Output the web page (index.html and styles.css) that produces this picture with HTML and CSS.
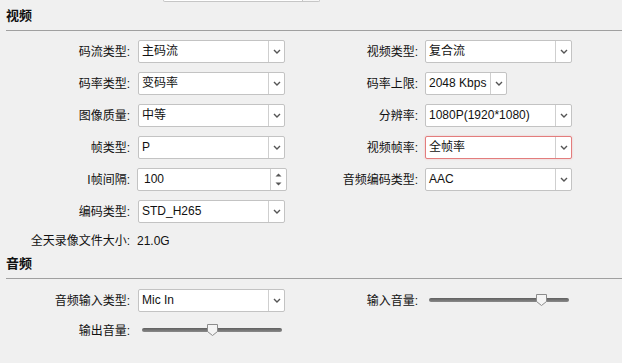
FILE: index.html
```html
<!DOCTYPE html>
<html lang="zh-CN">
  <head>
    <meta charset="UTF-8" />
    <title>视频音频</title>
    <link rel="stylesheet" href="styles.css">
  </head>
  <body>
    <div class="topbar">
      <div class="topbox"><span class="topbox-btn"></span></div>
    </div>

    <section class="group">
      <h2 class="group-title">视频</h2>
      <div class="form">
        <label class="label">码流类型:</label>
        <div class="select"><span class="value">主码流</span><span class="arrow"><svg width="8" height="5" viewBox="0 0 8 5"><path d="M1 1 L4 4 L7 1" /></svg></span></div>
        <label class="label">视频类型:</label>
        <div class="select"><span class="value">复合流</span><span class="arrow"><svg width="8" height="5" viewBox="0 0 8 5"><path d="M1 1 L4 4 L7 1" /></svg></span></div>

        <label class="label">码率类型:</label>
        <div class="select"><span class="value">变码率</span><span class="arrow"><svg width="8" height="5" viewBox="0 0 8 5"><path d="M1 1 L4 4 L7 1" /></svg></span></div>
        <label class="label">码率上限:</label>
        <div class="select short"><span class="value">2048 Kbps</span><span class="arrow"><svg width="8" height="5" viewBox="0 0 8 5"><path d="M1 1 L4 4 L7 1" /></svg></span></div>

        <label class="label">图像质量:</label>
        <div class="select"><span class="value">中等</span><span class="arrow"><svg width="8" height="5" viewBox="0 0 8 5"><path d="M1 1 L4 4 L7 1" /></svg></span></div>
        <label class="label">分辨率:</label>
        <div class="select"><span class="value">1080P(1920*1080)</span><span class="arrow"><svg width="8" height="5" viewBox="0 0 8 5"><path d="M1 1 L4 4 L7 1" /></svg></span></div>

        <label class="label">帧类型:</label>
        <div class="select"><span class="value">P</span><span class="arrow"><svg width="8" height="5" viewBox="0 0 8 5"><path d="M1 1 L4 4 L7 1" /></svg></span></div>
        <label class="label">视频帧率:</label>
        <div class="select invalid"><span class="value">全帧率</span><span class="arrow"><svg width="8" height="5" viewBox="0 0 8 5"><path d="M1 1 L4 4 L7 1" /></svg></span></div>

        <label class="label">I帧间隔:</label>
        <div class="spinner"><span class="value">100</span><span class="spin"><svg width="7" height="4" viewBox="0 0 7 4"><path d="M0.5 3.5 L3.5 0.5 L6.5 3.5 Z" /></svg><svg width="7" height="4" viewBox="0 0 7 4"><path d="M0.5 0.5 L3.5 3.5 L6.5 0.5 Z" /></svg></span></div>
        <label class="label">音频编码类型:</label>
        <div class="select"><span class="value">AAC</span><span class="arrow"><svg width="8" height="5" viewBox="0 0 8 5"><path d="M1 1 L4 4 L7 1" /></svg></span></div>

        <label class="label">编码类型:</label>
        <div class="select"><span class="value">STD_H265</span><span class="arrow"><svg width="8" height="5" viewBox="0 0 8 5"><path d="M1 1 L4 4 L7 1" /></svg></span></div>
      </div>
      <div class="info">
        <span class="label">全天录像文件大小:</span>
        <span class="info-value">21.0G</span>
      </div>
    </section>

    <section class="group">
      <h2 class="group-title">音频</h2>
      <div class="form audio">
        <label class="label">音频输入类型:</label>
        <div class="select"><span class="value">Mic In</span><span class="arrow"><svg width="8" height="5" viewBox="0 0 8 5"><path d="M1 1 L4 4 L7 1" /></svg></span></div>
        <label class="label">输入音量:</label>
        <div class="slider right"><span class="track"></span><svg class="thumb" style="left: 107px" width="11" height="12" viewBox="0 0 11 12"><path d="M0.5 0.5 H10.5 V7.5 L5.5 11.5 L0.5 7.5 Z" /></svg></div>

        <label class="label">输出音量:</label>
        <div class="slider"><span class="track"></span><svg class="thumb" style="left: 65px" width="11" height="12" viewBox="0 0 11 12"><path d="M0.5 0.5 H10.5 V7.5 L5.5 11.5 L0.5 7.5 Z" /></svg></div>
      </div>
    </section>
  </body>
</html>
```

FILE: styles.css
```css
*,
*::before,
*::after {
  box-sizing: border-box;
}

body {
  margin: 0;
  background-color: #f0f0f0;
  color: #111;
  font-family: "Liberation Sans", "Noto Sans CJK SC", sans-serif;
  font-size: 12px;
  width: 622px;
  height: 363px;
  overflow: hidden;
}

.topbar {
  height: 2px;
}

.topbox {
  margin-left: 163px;
  width: 157px;
  height: 2px;
  border: 1px solid #c6c6c6;
  border-top: none;
  border-radius: 0 0 2px 2px;
  background: #fff;
  display: flex;
  justify-content: flex-end;
}

.topbox-btn {
  width: 17px;
  border-left: 1px solid #c6c6c6;
  background: #f7f7f7;
}

.group-title {
  margin: 0 0 0 6px;
  height: 29px;
  line-height: 28px;
  font-size: 13px;
  font-weight: bold;
  border-bottom: 1px solid #a0a0a0;
}

.form {
  display: grid;
  grid-template-columns: 130px 170px 118px 1fr;
  grid-auto-rows: 23px;
  row-gap: 9px;
  margin-top: 9px;
  align-items: center;
}

.form.audio {
  margin-top: 10px;
  grid-template-rows: 23px 20px;
}

.label {
  text-align: right;
  line-height: 16px;
  white-space: nowrap;
}

.select,
.spinner {
  display: flex;
  height: 23px;
  width: 147px;
  margin-left: 8px;
  background: #fff;
  border: 1px solid #c3c3c3;
  border-radius: 2px;
}

.form > :nth-child(4n) {
  margin-left: 7px;
}

.select.short {
  width: 82px;
}

.select.invalid {
  border-color: #e37d7d;
  box-shadow: 0 0 2px rgba(230, 90, 90, 0.35);
}

.value {
  flex: 1;
  padding-left: 3px;
  line-height: 21px;
  white-space: nowrap;
  overflow: hidden;
}

.arrow {
  width: 16px;
  border-left: 1px solid #cfcfcf;
  display: flex;
  align-items: center;
  justify-content: center;
}

.arrow svg path {
  fill: none;
  stroke: #555;
  stroke-width: 1.4;
}

.spinner {
  width: 150px;
  margin-left: 7px;
}

.spinner .value {
  padding-left: 6px;
}

.spin {
  width: 16px;
  border-left: 1px solid #cfcfcf;
  display: flex;
  flex-direction: column;
  align-items: center;
  justify-content: center;
  gap: 5px;
}

.spin svg path {
  fill: #555;
}

.info {
  display: grid;
  grid-template-columns: 130px 1fr;
  height: 18px;
  margin-top: 9px;
  align-items: center;
}

.info-value {
  padding-left: 7px;
}

.slider {
  position: relative;
  width: 140px;
  height: 20px;
  margin-left: 12px;
}

.slider.right {
  margin-left: 11px;
}

.track {
  position: absolute;
  left: 0;
  right: 0;
  top: 7px;
  height: 4px;
  border-radius: 2px;
  background: linear-gradient(#5f5f5f, #8a8a8a);
}

.thumb {
  position: absolute;
  top: 3px;
}

.thumb path {
  fill: #f4f4f4;
  stroke: #8c8c8c;
}
```
